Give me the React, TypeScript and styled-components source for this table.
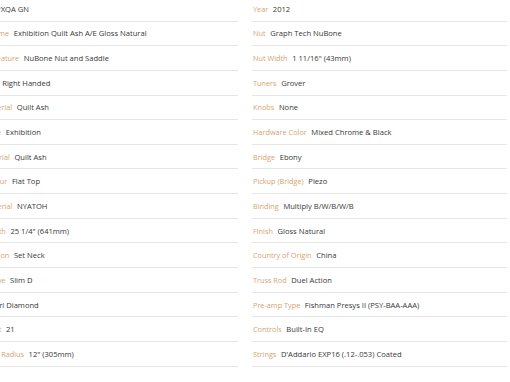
import React from "react";
import styled, { createGlobalStyle } from "styled-components";

const GlobalStyle = createGlobalStyle`
  html, body {
    margin: 0;
    padding: 0;
    background: #ffffff;
    overflow: hidden;
  }
  body {
    font-family: "Open Sans", "Liberation Sans", sans-serif;
  }
`;

const Viewport = styled.div`
  width: 510px;
  height: 382px;
  overflow: hidden;
`;

const SpecGrid = styled.div`
  display: grid;
  grid-template-columns: 273.5px 255px;
  column-gap: 14px;
  margin-left: -35.5px;
  margin-top: -3px;
`;

const Column = styled.ul`
  list-style: none;
  margin: 0;
  padding: 0;
`;

const Row = styled.li`
  display: flex;
  align-items: center;
  height: 24.65px;
  box-sizing: border-box;
  border-bottom: 1px solid #e6e6e6;
  padding-left: 1px;
  white-space: nowrap;
`;

const Label = styled.span`
  color: #d6a470;
  font-size: 7.3px;
  margin-right: 4.6px;
`;

const Value = styled.span`
  color: #383838;
  font-size: 7.6px;
`;

type Spec = [string, string];

// left column is partly scrolled out of view, as in the screenshot
const leftSpecs: Spec[] = [
  ["Series", "GPXQA GN"],
  ["Model Name", "Exhibition Quilt Ash A/E Gloss Natural"],
  ["Specific Feature", "NuBone Nut and Saddle"],
  ["Handings", "Right Handed"],
  ["Deck Material", "Quilt Ash"],
  ["Top Grade", "Exhibition"],
  ["Side Material", "Quilt Ash"],
  ["Body Colour", "Flat Top"],
  ["Neck Material", "NYATOH"],
  ["Scale Depth", "25 1/4\" (641mm)"],
  ["Construction", "Set Neck"],
  ["Neck Shape", "Slim D"],
  ["Inlay", "Pearl Diamond"],
  ["Fret Count", "21"],
  ["Fretboard Radius", "12\" (305mm)"],
];

const rightSpecs: Spec[] = [
  ["Year", "2012"],
  ["Nut", "Graph Tech NuBone"],
  ["Nut Width", "1 11/16\" (43mm)"],
  ["Tuners", "Grover"],
  ["Knobs", "None"],
  ["Hardware Color", "Mixed Chrome & Black"],
  ["Bridge", "Ebony"],
  ["Pickup (Bridge)", "Piezo"],
  ["Binding", "Multiply B/W/B/W/B"],
  ["Finish", "Gloss Natural"],
  ["Country of Origin", "China"],
  ["Truss Rod", "Duel Action"],
  ["Pre-amp Type", "Fishman Presys II (PSY-BAA-AAA)"],
  ["Controls", "Built-In EQ"],
  ["Strings", "D'Addario EXP16 (.12-.053) Coated"],
];

const SpecList = ({ specs }: { specs: Spec[] }) => (
  <Column>
    {specs.map(([label, value]) => (
      <Row key={label}>
        <Label>{label}</Label>
        <Value>{value}</Value>
      </Row>
    ))}
  </Column>
);

const App = () => {
  return (
    <Viewport>
      <GlobalStyle />
      <SpecGrid>
        <SpecList specs={leftSpecs} />
        <SpecList specs={rightSpecs} />
      </SpecGrid>
    </Viewport>
  );
};

export default App;
